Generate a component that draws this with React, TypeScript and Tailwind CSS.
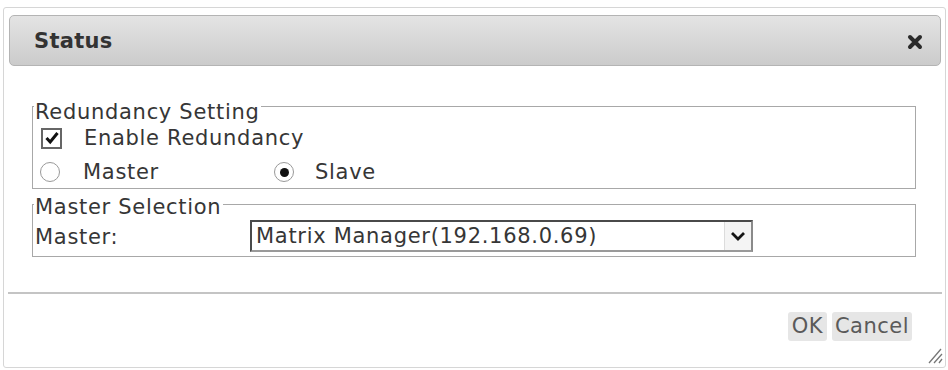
import React from "react"

function CloseIcon() {
  return (
    <svg width="16" height="16" viewBox="0 0 16 16" className="block">
      <path d="M3 3 L13 13 M13 3 L3 13" stroke="#2b2b2b" strokeWidth="4" strokeLinecap="round" />
    </svg>
  )
}

function Checkbox() {
  return (
    <span className="flex h-[21px] w-[21px] items-center justify-center border-2 border-[#666] bg-white">
      <svg width="14" height="14" viewBox="0 0 14 14">
        <path d="M1.5 7 L5.2 11 L12.5 2" fill="none" stroke="#111" strokeWidth="3" />
      </svg>
    </span>
  )
}

function Radio({ checked }: { checked?: boolean }) {
  return (
    <span className="flex h-[20px] w-[20px] items-center justify-center rounded-full border-[1.5px] border-[#999] bg-white">
      {checked && <span className="h-[9px] w-[9px] rounded-full bg-[#111]" />}
    </span>
  )
}

export default function App() {
  return (
    <div className="h-[370px] w-[948px] bg-white pl-[3px] pt-[7px] font-['DejaVu_Sans','Verdana',sans-serif] text-[21px] tracking-[0.7px] text-[#363636]">
      <div className="relative flex h-[361px] w-[943px] flex-col rounded-[3px] border border-[#d6d6d6] pl-[5px] pr-[4px] pt-[7px]">
        {/* Title bar */}
        <div className="flex h-[51px] items-center justify-between rounded-[5px] border border-[#b4b4b4] bg-linear-to-b from-[#e4e4e4] to-[#cbcbcb] pl-[24px] pr-[17px] pt-[2px]">
          <span className="font-bold tracking-[0.3px] text-[#333]">Status</span>
          <CloseIcon />
        </div>

        {/* Redundancy Setting */}
        <div className="ml-[23px] mr-[25px] mt-[40px] border border-[#a8a8a8] pb-[2px]">
          <div className="-mt-[7px] ml-[1px] w-fit bg-white pr-[2px] pl-[1px] leading-[24px]">Redundancy Setting</div>
          <div className="flex h-[28px] items-center pl-[8px]">
            <Checkbox />
            <span className="ml-[22px] leading-none">Enable Redundancy</span>
          </div>
          <div className="mt-[6px] flex h-[28px] items-center pl-[7px]">
            <div className="flex w-[234px] items-center">
              <Radio />
              <span className="ml-[23px] leading-none">Master</span>
            </div>
            <Radio checked />
            <span className="ml-[21px] leading-none">Slave</span>
          </div>
        </div>

        {/* Master Selection */}
        <div className="ml-[23px] mr-[25px] mt-[15px] border border-[#a8a8a8] pb-[4px]">
          <div className="-mt-[10px] ml-[1px] w-fit bg-white pr-[2px] pl-[1px] leading-[24px]">Master Selection</div>
          <div className="mt-[1px] flex h-[32px] items-center">
            <span className="w-[217px] pl-[2px] pt-[3px] leading-none">Master:</span>
            <div className="flex h-[32px] w-[503px] items-center border-2 border-b-[#9a9a9a] border-l-[#4a4a4a] border-r-[#8a8a8a] border-t-[#4a4a4a] bg-white">
              <span className="flex-1 pl-[4px] leading-none">Matrix Manager(192.168.0.69)</span>
              <span className="flex h-full w-[27px] items-center justify-center border-l border-[#dcdcdc] bg-[#f4f4f4]">
                <svg width="16" height="10" viewBox="0 0 16 10">
                  <path d="M2 2 L8 8 L14 2" fill="none" stroke="#151515" strokeWidth="2.8" />
                </svg>
              </span>
            </div>
          </div>
        </div>

        {/* Separator */}
        <div className="-ml-[1px] -mr-[1px] mt-[35px] border-t-2 border-[#c4c4c4]" />

        {/* Buttons */}
        <div className="mr-[29px] mt-[18px] flex justify-end gap-[5px]">
          <button className="flex h-[29px] w-[39px] items-center justify-center rounded-[3px] bg-[#e6e6e6] leading-none tracking-[0.5px] text-[#5a5a5a]">
            OK
          </button>
          <button className="flex h-[29px] w-[80px] items-center justify-center rounded-[3px] bg-[#e6e6e6] leading-none tracking-[0.5px] text-[#5a5a5a]">
            Cancel
          </button>
        </div>

        {/* Resize grip */}
        <svg width="18" height="18" viewBox="0 0 18 18" className="absolute bottom-[3px] right-[2px]">
          <path d="M4 17 L16 3 M9 17 L17 8 M14 17 L17 13" stroke="#777" strokeWidth="1.3" />
        </svg>
      </div>
    </div>
  )
}
